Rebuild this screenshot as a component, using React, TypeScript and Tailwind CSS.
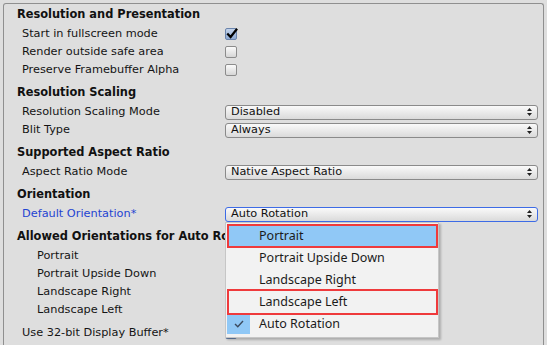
import React from 'react'

const uiFont = { fontFamily: '"DejaVu Sans", Verdana, sans-serif' }
const menuFont = { fontFamily: '"Noto Sans", "Open Sans", sans-serif' }

// Unity-style checkbox
function Checkbox({ checked = false }: { checked?: boolean }) {
  return (
    <div
      className={`relative w-[12px] h-[12px] rounded-[2px] border ${
        checked
          ? 'border-[#6a84ac] bg-gradient-to-b from-[#c3d3ea] to-[#8eaad4]'
          : 'border-[#8c8c8c] bg-gradient-to-b from-[#fbfbfb] to-[#d6d6d6]'
      }`}
    >
      {checked && (
        <svg viewBox="0 0 12 12" className="absolute left-[0px] top-[-1px] w-[12px] h-[12px]">
          <path d="M2 6.2 L4.6 9 L10.4 1.6" fill="none" stroke="#000" strokeWidth="2.2" strokeLinecap="square" />
        </svg>
      )}
    </div>
  )
}

function Popup({ value, focused = false }: { value: string; focused?: boolean }) {
  return (
    <div
      className={`flex-1 h-[15px] flex items-center justify-between rounded-[3px] border pl-[5px] pr-[5px] bg-gradient-to-b from-[#fafafa] to-[#dadada] ${
        focused ? 'border-[#3d6be6]' : 'border-[#8a8a8a]'
      }`}
    >
      <span className="text-[11.3px] leading-none text-[#111]">{value}</span>
      <svg viewBox="0 0 5 8" className="w-[5px] h-[8px]">
        <path d="M2.5 0 L5 3 L0 3 Z M0 5 L5 5 L2.5 8 Z" fill="#222" />
      </svg>
    </div>
  )
}

function Header({ children }: { children: React.ReactNode }) {
  return (
    <div className="h-[20px] flex items-center pl-[13px] text-[11.4px] font-bold text-[#111] whitespace-nowrap">
      {children}
    </div>
  )
}

function Row({
  label,
  indent = false,
  blue = false,
  children,
}: {
  label: string
  indent?: boolean
  blue?: boolean
  children?: React.ReactNode
}) {
  return (
    <div className="h-[18px] flex items-center">
      <div
        className={`w-[221px] shrink-0 text-[11.3px] whitespace-nowrap ${indent ? 'pl-[33px]' : 'pl-[18px]'} ${
          blue ? 'text-[#1f44d2]' : 'text-[#141414]'
        }`}
      >
        {label}
      </div>
      {children}
    </div>
  )
}

const menuItems = ['Portrait', 'Portrait Upside Down', 'Landscape Right', 'Landscape Left', 'Auto Rotation']

function OrientationMenu() {
  return (
    <div
      className="absolute left-[221px] top-[218px] w-[214px] h-[116px] z-10 bg-[#f2f2f2] border border-[#c6c6c6] shadow-[2px_2px_2px_rgba(0,0,0,0.22)] pt-[2px] pb-[2px] px-[1px]"
      style={menuFont}
    >
      {menuItems.map((item, i) => (
        <div
          key={item}
          className={`h-[22px] flex items-center text-[12.5px] text-[#1b1b1b] ${i === 0 ? 'bg-[#90c8f6]' : ''}`}
        >
          <div className={`w-[23px] h-[20px] flex items-center justify-center ${i === 4 ? 'bg-[#90c8f6]' : ''}`}>
            {i === 4 && (
              <svg viewBox="0 0 10 8" className="w-[10px] h-[8px]">
                <path d="M1 4 L3.8 6.8 L9 1" fill="none" stroke="#3b4a5e" strokeWidth="1.4" />
              </svg>
            )}
          </div>
          <span className="pl-[9px]">{item}</span>
        </div>
      ))}

      {/* red highlight boxes */}
      <div className="absolute left-[1px] top-[1px] w-[211px] h-[24px] border-2 border-[#ef3a3c]" />
      <div className="absolute left-[1px] top-[66px] w-[211px] h-[26px] border-2 border-[#ef3a3c]" />
    </div>
  )
}

export default function App() {
  return (
    <div className="w-[547px] h-[345px] bg-[#dedede] overflow-hidden pt-[3px] pl-[3px]" style={uiFont}>
      <div className="relative w-[541px] h-[360px] border-t border-l border-r border-[#8f8f8f] rounded-t-[3px] pt-[1px] pr-[5px]">
        <Header>Resolution and Presentation</Header>
        <Row label="Start in fullscreen mode">
          <Checkbox checked />
        </Row>
        <Row label="Render outside safe area">
          <Checkbox />
        </Row>
        <Row label="Preserve Framebuffer Alpha">
          <Checkbox />
        </Row>

        <div className="mt-[4px]">
          <Header>Resolution Scaling</Header>
          <Row label="Resolution Scaling Mode">
            <Popup value="Disabled" />
          </Row>
          <Row label="Blit Type">
            <Popup value="Always" />
          </Row>
        </div>

        <div className="mt-[4px]">
          <Header>Supported Aspect Ratio</Header>
          <Row label="Aspect Ratio Mode">
            <Popup value="Native Aspect Ratio" />
          </Row>
        </div>

        <div className="mt-[4px]">
          <Header>Orientation</Header>
          <Row label="Default Orientation*" blue>
            <Popup value="Auto Rotation" focused />
          </Row>
        </div>

        <div className="mt-[4px]">
          <Header>Allowed Orientations for Auto Rotation</Header>
          <Row label="Portrait" indent>
            <Checkbox checked />
          </Row>
          <Row label="Portrait Upside Down" indent>
            <Checkbox />
          </Row>
          <Row label="Landscape Right" indent>
            <Checkbox checked />
          </Row>
          <Row label="Landscape Left" indent>
            <Checkbox checked />
          </Row>
        </div>

        <div className="mt-[5px]">
          <Row label="Use 32-bit Display Buffer*">
            <Checkbox checked />
          </Row>
        </div>

        <OrientationMenu />
      </div>
    </div>
  )
}
